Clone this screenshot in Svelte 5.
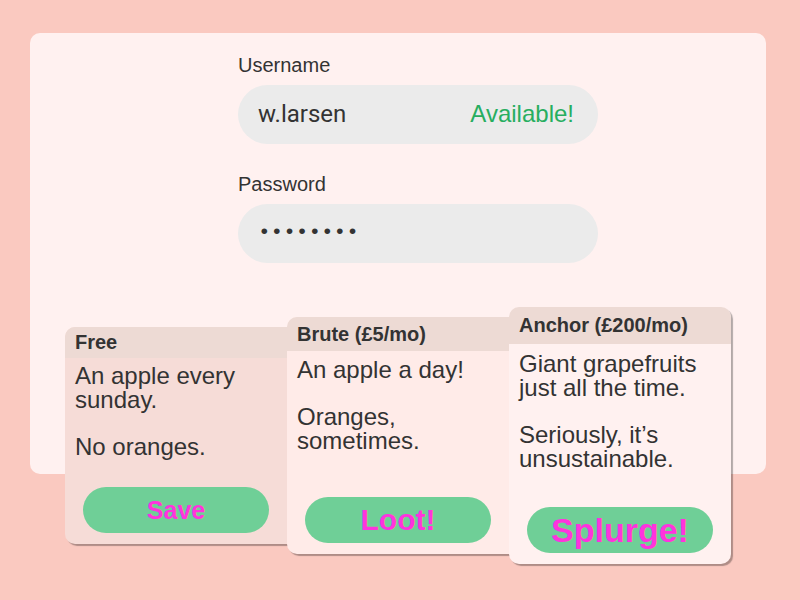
<script>
  let username = $state('w.larsen');
  let password = $state('applepie');

  const plans = [
    { id: 'free', title: 'Free', lines: ['An apple every sunday.', 'No oranges.'], action: 'Save' },
    { id: 'brute', title: 'Brute (£5/mo)', lines: ['An apple a day!', 'Oranges, sometimes.'], action: 'Loot!' },
    { id: 'anchor', title: 'Anchor (£200/mo)', lines: ['Giant grapefruits just all the time.', 'Seriously, it’s unsustainable.'], action: 'Splurge!' }
  ];
</script>

<main>
  <form onsubmit={(e) => e.preventDefault()}>
    <div class="fields">
      <div class="field">
        <label for="username">Username</label>
        <div class="box">
          <input id="username" type="text" autocomplete="off" spellcheck="false" bind:value={username} />
          <output for="username">Available!</output>
        </div>
      </div>
      <div class="field">
        <label for="password">Password</label>
        <div class="box">
          <input id="password" type="password" bind:value={password} />
        </div>
      </div>
    </div>

    <div class="plans">
      {#each plans as plan (plan.id)}
        <section class="plan {plan.id}">
          <h2>{plan.title}</h2>
          <div class="copy">
            {#each plan.lines as line}
              <p>{line}</p>
            {/each}
          </div>
          <button type="button">{plan.action}</button>
        </section>
      {/each}
    </div>
  </form>
</main>

<style>
  :global(body) {
    margin: 0;
    background: #fac9c0;
  }

  main {
    box-sizing: border-box;
    min-height: 100vh;
    padding: 33px 34px 34px 30px;
    background: #fac9c0;
    color: #333;
    font-family: 'Liberation Sans', Arial, sans-serif;
  }

  form {
    position: relative;
    isolation: isolate;
    padding: 20px 35px 0;
  }

  /* The panel stops short so the plans hang over its lower edge. */
  form::before {
    content: '';
    position: absolute;
    inset: 0 0 90px;
    z-index: -1;
    border-radius: 10px;
    background: #fff1f0;
  }

  .fields {
    display: flex;
    flex-direction: column;
    gap: 28px;
    max-width: 360px;
    margin: 0 auto;
    padding-left: 40px;
  }

  .field {
    display: flex;
    flex-direction: column;
    gap: 8px;
  }

  label {
    font-size: 20px;
    line-height: 24px;
  }

  .box {
    display: flex;
    align-items: center;
    box-sizing: border-box;
    height: 59px;
    padding: 0 24px 2px 20px;
    border-radius: 30px;
    background: #ebebeb;
    font-size: 24px;
  }

  input {
    flex: 1;
    min-width: 0;
    padding: 0;
    border: 0;
    outline: 0;
    background: transparent;
    color: inherit;
    font: 24px/32px Roboto, sans-serif;
  }

  #password {
    font-family: 'Liberation Mono', monospace;
    font-size: 21px;
  }

  output {
    color: #27ae60;
  }

  .plans {
    display: grid;
    grid-template-columns: repeat(3, 1fr);
    margin-top: 44px;
  }

  .plan {
    display: flex;
    flex-direction: column;
    position: relative;
    overflow: hidden;
    border-radius: 10px 0 0 10px;
    box-shadow: 2px 2px 1px rgb(0 0 0 / 30%);
  }

  h2 {
    margin: 0;
    padding: 0 10px;
    background: #eddad4;
    font-size: 20px;
    line-height: 37px;
  }

  .copy {
    display: flex;
    flex-direction: column;
    gap: 23px;
    padding: 7px 10px 24px;
    font-size: 24px;
    line-height: 24px;
  }

  p {
    margin: 0;
  }

  button {
    height: 46px;
    margin: auto 18px 11px;
    padding: 0;
    border: 0;
    border-radius: 23px;
    background: #6fcf97;
    color: #ff33dd;
    font-family: inherit;
    font-weight: 700;
    cursor: pointer;
  }

  .free {
    min-height: 217px;
    margin: 20px 0;
    background: #f6dcd7;
  }

  .free h2 {
    line-height: 31px;
  }

  .free .copy {
    padding-top: 6px;
  }

  .free button {
    font-size: 25px;
  }

  .brute {
    margin: 10px 0;
    background: #ffebe8;
  }

  .brute h2 {
    line-height: 34px;
  }

  .brute button {
    font-size: 30px;
  }

  .anchor {
    border-radius: 10px;
    background: #fff1f0;
  }

  .anchor .copy {
    padding-top: 8px;
  }

  .anchor button {
    font-size: 34px;
  }
</style>
